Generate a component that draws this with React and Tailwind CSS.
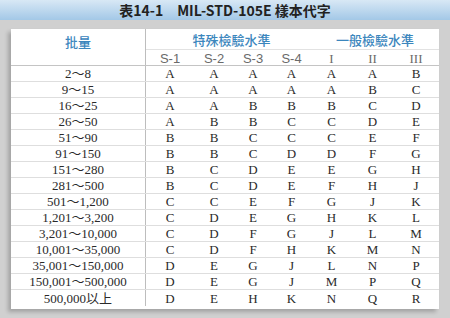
const widths = ["w-[135px]", "w-[48px]", "w-[40px]", "w-[38px]", "w-[39px]", "w-[41px]", "w-[41px]", "w-[46px]"]

const rows = [
  ["2～8", "A", "A", "A", "A", "A", "A", "B"],
  ["9～15", "A", "A", "A", "A", "A", "B", "C"],
  ["16～25", "A", "A", "B", "B", "B", "C", "D"],
  ["26～50", "A", "B", "B", "C", "C", "D", "E"],
  ["51～90", "B", "B", "C", "C", "C", "E", "F"],
  ["91～150", "B", "B", "C", "D", "D", "F", "G"],
  ["151～280", "B", "C", "D", "E", "E", "G", "H"],
  ["281～500", "B", "C", "D", "E", "F", "H", "J"],
  ["501～1,200", "C", "C", "E", "F", "G", "J", "K"],
  ["1,201～3,200", "C", "D", "E", "G", "H", "K", "L"],
  ["3,201～10,000", "C", "D", "F", "G", "J", "L", "M"],
  ["10,001～35,000", "C", "D", "F", "H", "K", "M", "N"],
  ["35,001～150,000", "D", "E", "G", "J", "L", "N", "P"],
  ["150,001～500,000", "D", "E", "G", "J", "M", "P", "Q"],
  ["500,000以上", "D", "E", "H", "K", "N", "Q", "R"],
]

const levels = ["S-1", "S-2", "S-3", "S-4", "I", "II", "III"]

const serif = "font-['Liberation_Serif','Noto_Sans_CJK_TC',serif]"
const cjk = "font-['Noto_Sans_CJK_TC',sans-serif]"

export default function App() {
  return (
    <div className="w-[450px] h-[318px] bg-[#d0d0d0] overflow-hidden">
      {/* title bar */}
      <div className="h-[20px] bg-gradient-to-b from-[#d8e8f5] to-[#a3c8e7] flex items-center justify-center">
        <span className={`text-[14px] font-bold text-[#222] leading-none ${cjk}`}>
          表14-1　MIL-STD-105E 樣本代字
        </span>
      </div>

      <div className="pl-[11px] pt-[9px]">
        <div className="w-[428px] bg-white pb-[3px] shadow-[-3px_3px_4px_rgba(0,0,0,0.22)]">
          {/* header */}
          <div className="flex h-[37px] border-b border-[#c4c4c4]">
            <div className={`${widths[0]} border-r border-[#bdbdbd] flex justify-center pt-[4px] text-[13px] font-medium text-[#3b86bd] leading-[18px] ${cjk}`}>
              批量
            </div>
            <div className="flex-1 flex flex-col">
              <div className={`h-[22px] flex border-b border-[#e2e2e2] text-[13px] font-medium text-[#3b86bd] leading-none ${cjk}`}>
                <div className="w-[165px] flex items-center justify-center pl-[6px]">特殊檢驗水準</div>
                <div className="flex-1 flex items-center justify-center">一般檢驗水準</div>
              </div>
              <div className="flex-1 flex items-center pt-[2px]">
                {levels.map((l, i) => (
                  <div
                    key={l}
                    className={`${widths[i + 1]} text-center text-[13px] leading-none text-[#6a6a6a] ${
                      i < 4 ? "font-['Liberation_Sans',sans-serif]" : serif
                    }`}
                  >
                    {l}
                  </div>
                ))}
              </div>
            </div>
          </div>

          {/* body */}
          {rows.map((r, ri) => (
            <div
              key={ri}
              className={`flex h-[16px] items-center ${ri < rows.length - 1 ? "border-b border-[#dedede]" : ""}`}
            >
              {r.map((c, ci) => (
                <div
                  key={ci}
                  className={`${widths[ci]} h-full flex items-center justify-center text-[13px] leading-none text-[#2a2a2a] ${serif} ${
                    ci === 0 ? "border-r border-[#bdbdbd]" : ""
                  }`}
                >
                  {c}
                </div>
              ))}
            </div>
          ))}
        </div>
      </div>
    </div>
  )
}
